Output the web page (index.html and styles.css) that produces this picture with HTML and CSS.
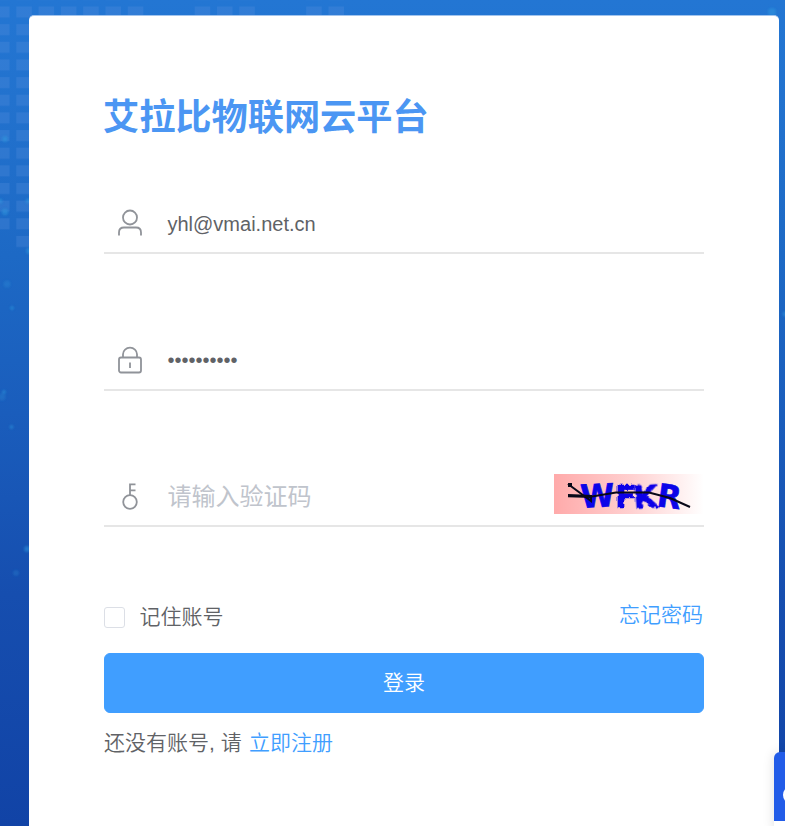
FILE: index.html
```html
<!DOCTYPE html>
<html lang="zh-CN">
<head>
<meta charset="utf-8">
<title>艾拉比物联网云平台</title>
<link rel="stylesheet" href="styles.css">
</head>
<body>
<svg class="backdrop" viewBox="0 0 785 826" aria-hidden="true">
  <defs>
    <pattern id="col" width="22.3" height="17.65" patternUnits="userSpaceOnUse" x="16.3" y="6.5"><rect width="15.5" height="11" fill="#5a91df" fill-opacity=".27"/></pattern>
    <filter id="soft" x="-100%" y="-100%" width="300%" height="300%"><feGaussianBlur stdDeviation="1.3"/></filter>
  </defs>
  <path fill="url(#col)" d="M0 0H14V234H0ZM14 0H36V252H14ZM36 0H146V20H36ZM192 0H258V20H192ZM304 0H347V20H304Z"/>
  <g fill="#2f9ae0" fill-opacity=".5" filter="url(#soft)">
    <circle cx="5" cy="139" r="3"/><circle cx="0" cy="201" r="2.5"/><circle cx="28" cy="201" r="2.5"/><circle cx="5" cy="212" r="3.2"/><circle cx="29" cy="251" r="3"/>
    <circle cx="7" cy="284" r="3.5" opacity=".55"/><circle cx="12" cy="308" r="2"/><circle cx="4" cy="392" r="2"/><circle cx="2" cy="397" r="3.5" opacity=".5"/><circle cx="11.5" cy="427" r="2"/><circle cx="27" cy="549" r="3"/><circle cx="16" cy="573" r="3" opacity=".5"/><circle cx="772" cy="12" r="4"/><circle cx="785" cy="314" r="2.5"/>
  </g>
</svg>
<main class="card">
  <h1>艾拉比物联网云平台</h1>
  <form>
    <div class="field">
      <svg class="icon" viewBox="0 0 28 28"><circle cx="14" cy="8.5" r="7"/><path d="M3 26.5V23.5Q3 18.5 8 18.5H20Q25 18.5 25 23.5V26.5"/></svg>
      <span class="value">yhl@vmai.net.cn</span>
    </div>
    <div class="field field-password">
      <svg class="icon" viewBox="0 0 28 28"><rect x="3" y="11.5" width="22" height="15" rx="2"/><path d="M7 11.5V8.2a7 6.6 0 0 1 14 0V11.5M14 16.5V22"/></svg>
      <span class="mask">••••••••••</span>
    </div>
    <div class="field field-code">
      <svg class="icon" viewBox="0 0 28 28"><circle cx="14" cy="20" r="6.8"/><path d="M14 13V2.3H19.5M14 8.3H19.5"/></svg>
      <span class="placeholder">请输入验证码</span>
      <svg class="captcha" viewBox="0 0 150 40">
        <defs>
          <linearGradient id="pink"><stop offset="0" stop-color="#ffaaaa"/><stop offset=".5" stop-color="#ffcfcf"/><stop offset="1" stop-color="#fff"/></linearGradient>
          <filter id="ragged" x="-30%" y="-30%" width="160%" height="160%"><feTurbulence type="fractalNoise" baseFrequency=".35" numOctaves="1" seed="4"/><feDisplacementMap in="SourceGraphic" scale="4" xChannelSelector="R" yChannelSelector="G"/></filter>
        </defs>
        <rect width="150" height="40" fill="url(#pink)"/>
        <g class="letters">
          <text transform="translate(27 34) rotate(-3)" textLength="34" lengthAdjust="spacingAndGlyphs">W</text>
          <text filter="url(#ragged)" transform="translate(61 34)" textLength="22" lengthAdjust="spacingAndGlyphs">F</text>
          <text filter="url(#ragged)" transform="translate(80 35) rotate(-4)" textLength="25" lengthAdjust="spacingAndGlyphs">K</text>
          <text transform="translate(102 32) rotate(8)" textLength="24" lengthAdjust="spacingAndGlyphs">R</text>
        </g>
        <path fill="none" stroke="#080818" stroke-width="2" d="M14 10L37 27V22M38 22.5L62 18.5H95L116 24L136 33"/>
        <path fill="#080818" d="M14 9h4v4h-4zM14 20L38 21V24L14 23.3Z"/>
      </svg>
    </div>
    <div class="options">
      <label class="remember"><span class="box"></span>记住账号</label>
      <a class="forgot">忘记密码</a>
    </div>
    <button class="submit" type="button">登录</button>
    <p class="signup">还没有账号, 请 <a>立即注册</a></p>
  </form>
</main>
<aside class="service"><span class="bubble"></span></aside>
</body>
</html>
```
FILE: styles.css
```css
* { box-sizing: border-box; }
html, body { height: 100%; }
body {
  margin: 0;
  overflow: hidden;
  padding: 15px 6px 0 29px;
  color: #606266;
  font: 350 21px/30px "Liberation Sans", "Noto Sans CJK SC", sans-serif;
  background: linear-gradient(#2376d3 0, #2272ce 12%, #1d69c5 31%, #1a5dbc 50%, #164eaf 72%, #1143a6 100%);
}
.backdrop { position: absolute; inset: 0; width: 785px; height: 826px; z-index: -1; }
.card {
  height: 840px;
  padding: 76px 75px 0;
  background: #fff;
  border-radius: 5px;
  border-top: 1px solid #a2c4ed;
}
h1 { margin: 0 0 0 -1px; height: 96px; font-size: 36.2px; line-height: 51px; font-weight: 700; color: #4b96f3; }
.field {
  display: flex;
  align-items: center;
  height: 66px;
  padding: 6px 0 0 11.5px;
  border-bottom: 2px solid #e6e6e6;
}
.field-password { margin-top: 71px; padding-top: 5px; }
.field-code { margin-top: 70px; }
.icon { width: 28px; height: 28px; margin-right: 24px; fill: none; stroke: #909399; stroke-width: 1.8; flex: none; }
.value { font-size: 20px; padding-top: 2px; }
.mask { font-size: 20px; }
.placeholder { font-size: 24px; font-weight: 400; color: #c0c4cc; padding-top: 1px; }
.captcha { width: 150px; height: 40px; margin: 0 0 4px auto; }
.letters { font: 700 32px "DejaVu Sans", sans-serif; fill: #0b05e8; stroke: #0b05e8; stroke-width: .6; }
.options { display: flex; justify-content: space-between; height: 126px; padding: 72px 1px 0 0; }
.remember { display: flex; align-items: center; height: 36px; }
.box { width: 21px; height: 21px; margin-right: 14.5px; border: 1px solid #dcdfe6; border-radius: 3px; }
a { color: #409eff; }
.forgot { line-height: 32px; }
.submit {
  display: block;
  width: 100%;
  height: 60px;
  padding: 0;
  border: 1px solid #409eff;
  border-radius: 6px;
  background: #409eff;
  color: #fff;
  font: inherit;
}
.signup { margin: 15px 0 0; white-space: nowrap; }
.signup a { margin-left: 1.5px; }
.service {
  position: absolute;
  top: 752px;
  right: 0;
  width: 11px;
  height: 80px;
  background: linear-gradient(#225ce8 69px, #fff 69px);
  border-radius: 6px 0 0;
  box-shadow: 0 0 12px rgba(0, 0, 0, .13);
  clip-path: inset(-12px 0 0 -12px);
}
.bubble { position: absolute; left: 9px; top: 34px; width: 18px; height: 18px; border-radius: 50%; background: #fff; }
```
